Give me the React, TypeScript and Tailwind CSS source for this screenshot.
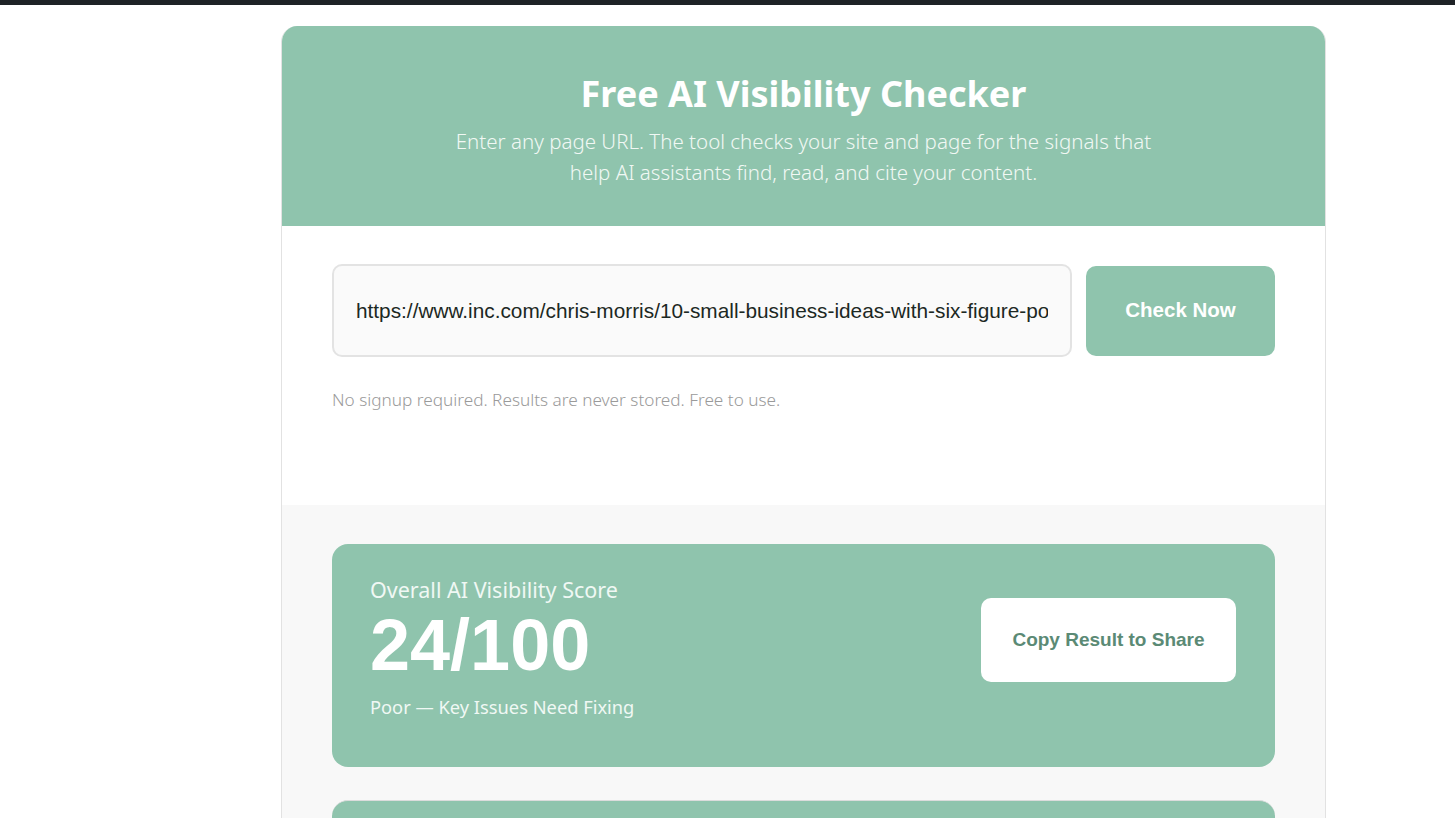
export default function App() {
  return (
    <div className="min-h-screen bg-white font-['Noto_Sans',sans-serif]">
      <div className="h-[5px] bg-[#1e2226]" />
      <div className="ml-[281px] mt-[21px] w-[1045px] overflow-hidden rounded-t-[16px] border-x border-[#e2e2e2]">
        {/* header */}
        <div className="bg-[#8fc4ad] px-10 pt-[45px] pb-[38px] text-center">
          <h1 className="text-[36px] font-bold leading-[46px] text-white">Free AI Visibility Checker</h1>
          <p className="mx-auto mt-[9px] max-w-[730px] text-[20.5px] font-light leading-[31px] text-[#f1f8f4]">
            Enter any page URL. The tool checks your site and page for the signals that help AI assistants find, read, and cite your content.
          </p>
        </div>

        {/* form */}
        <div className="bg-white px-[50px] pt-[38px] pb-[93px]">
          <div className="flex items-center gap-[14px]">
            <input
              readOnly
              defaultValue="https://www.inc.com/chris-morris/10-small-business-ideas-with-six-figure-potential"
              className="h-[93px] min-w-0 flex-1 rounded-[10px] border-2 border-[#e3e3e3] bg-[#fafafa] px-[22px] font-['Liberation_Sans',sans-serif] text-[20.8px] text-[#1c2823] outline-none"
            />
            <button className="h-[90px] w-[189px] shrink-0 rounded-[10px] bg-[#8fc4ad] font-['Liberation_Sans',sans-serif] text-[20.5px] font-bold text-white">
              Check Now
            </button>
          </div>
          <p className="mt-[31px] text-[17.2px] font-light leading-[24px] text-[#9a9a9a]">No signup required. Results are never stored. Free to use.</p>
        </div>

        {/* results */}
        <div className="bg-[#f8f8f8] px-[50px] pt-[39px] pb-10">
          <div className="flex items-start justify-between rounded-[16px] bg-[#8fc4ad] pl-[38px] pr-[39px] pt-[32px] pb-[47px]">
            <div>
              <p className="text-[21.5px] leading-[28px] text-[#f0f8f4]">Overall AI Visibility Score</p>
              <p className="mt-px font-['Liberation_Sans',sans-serif] text-[72px] font-bold leading-[80px] text-white">24/100</p>
              <p className="mt-[9px] text-[18.3px] leading-[26px] text-[#f0f8f4]">Poor — Key Issues Need Fixing</p>
            </div>
            <button className="mt-[22px] h-[84px] w-[255px] rounded-[10px] bg-white font-['Liberation_Sans',sans-serif] text-[19px] font-bold text-[#5b8a75]">
              Copy Result to Share
            </button>
          </div>
          <div className="mt-[33px] h-[120px] rounded-[16px] border-t border-[#dcdcdc] bg-[#8fc4ad]" />
        </div>
      </div>
    </div>
  )
}
